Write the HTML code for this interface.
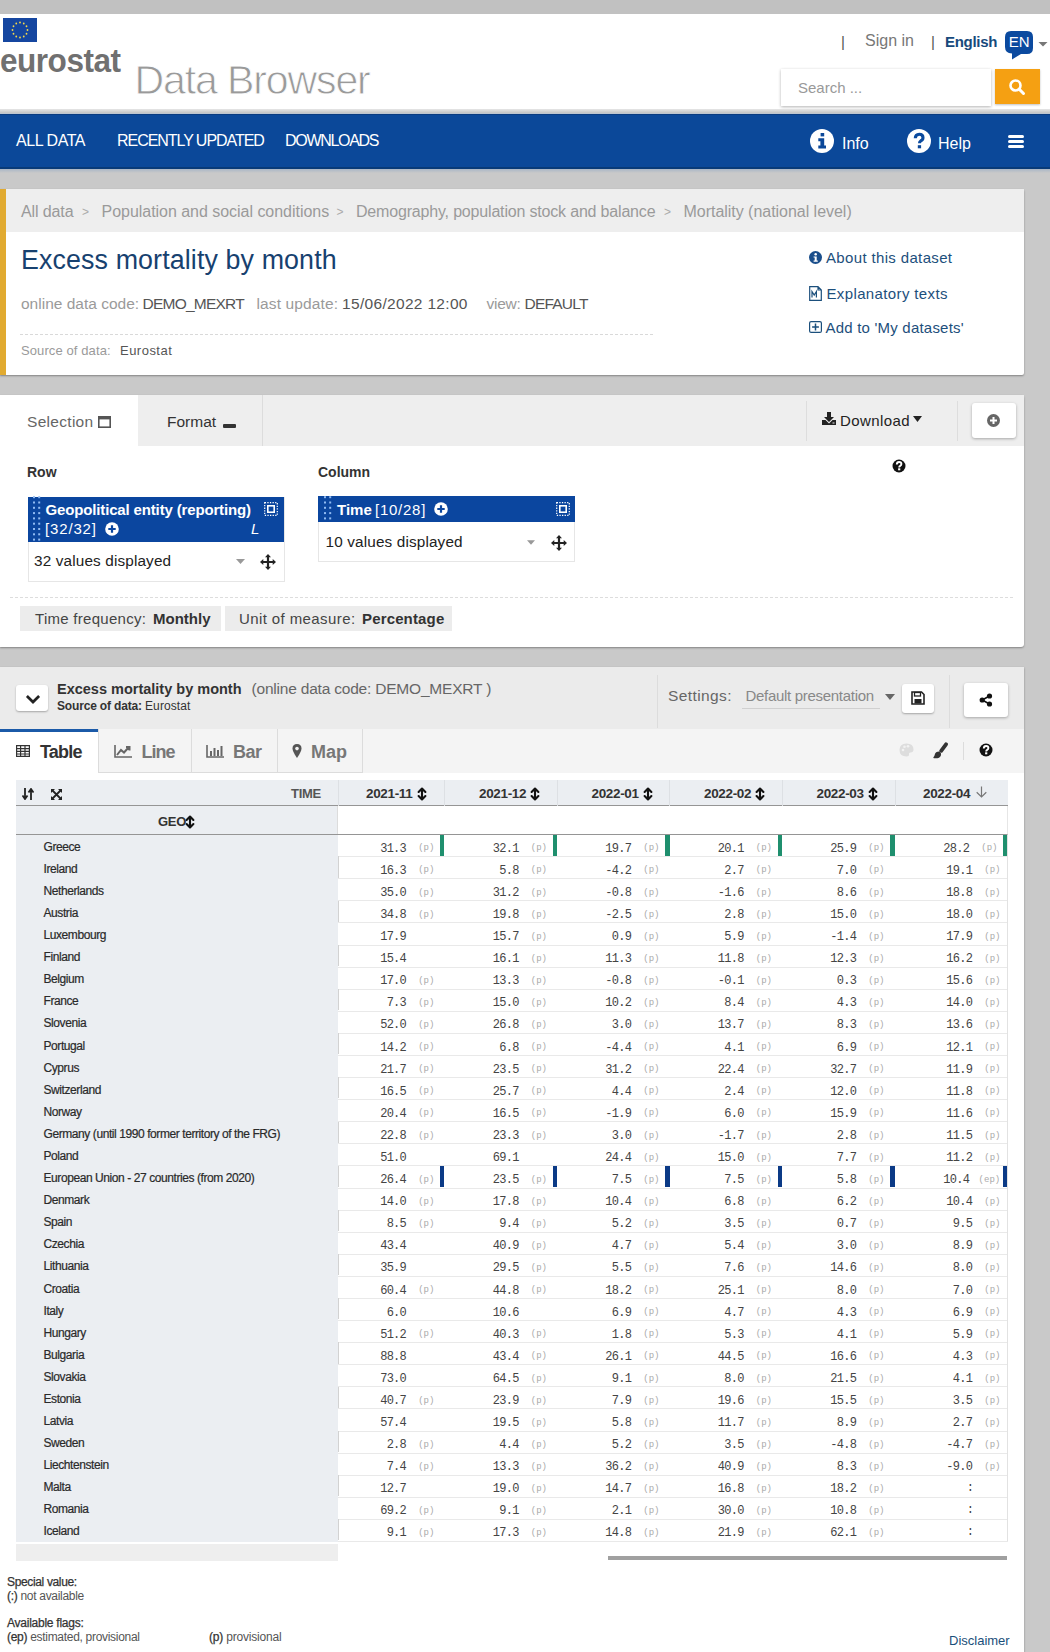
<!DOCTYPE html>
<html><head><meta charset="utf-8">
<style>
*{box-sizing:border-box;margin:0;padding:0}
html,body{width:1050px;height:1652px;overflow:hidden}
body{background:#c9c9c9;font-family:"Liberation Sans",sans-serif;position:relative;color:#333}
.abs{position:absolute}
.t{position:absolute;white-space:nowrap;line-height:1}
#topstrip{left:0;top:0;width:1050px;height:14px;background:#c1c1c1}
#header{left:0;top:14px;width:1050px;height:95px;background:#fff}
#hline{left:0;top:109px;width:1050px;height:5px;background:linear-gradient(#e6e6e6,#c8c8c8 70%,#b8c4d4)}
#nav{left:0;top:114px;width:1050px;height:55px;background:#0b4899;box-shadow:inset 0 1px 0 #0a3c80,inset 0 -2px 0 #083a78}
#navsh{left:0;top:169px;width:1050px;height:4px;background:linear-gradient(#a9b6c6,#c9c9c9)}
.navt{color:#fff;font-size:16px}
.card{position:absolute;background:#fff;box-shadow:0 1px 2px rgba(0,0,0,.35)}
.mono{font-family:"Liberation Mono",monospace}
.rl{left:43.5px;font-size:12px;color:#2a2a2a;letter-spacing:-.42px;-webkit-text-stroke:.2px #2a2a2a}
.mv{font-family:"Liberation Mono",monospace;font-size:12px;color:#444;letter-spacing:-.75px}
.mf{font-family:"Liberation Mono",monospace;font-size:9px;color:#aaa}
.hd{font-size:13.5px;font-weight:bold;color:#333;letter-spacing:-.35px}
.bc{font-size:16px;color:#9a9a9a}
.bcs{font-size:12px;color:#aaa}
.ml{top:296.2px;font-size:15.5px;color:#9a9a9a}
.mvv{top:296.2px;font-size:15.5px;color:#555}
.lk{font-size:15px;color:#1d4f7c}
</style></head><body>
<div id="topstrip" class="abs"></div>
<div id="header" class="abs">
  <!-- EU flag -->
  <svg class="abs" style="left:3px;top:4px" width="34" height="24" viewBox="0 0 34 24">
    <rect width="34" height="24" fill="#1546a0"/>
    <g fill="#f5d94a">
      <circle cx="17" cy="4.5" r="0.9"/><circle cx="20.75" cy="5.5" r="0.9"/><circle cx="23.5" cy="8.25" r="0.9"/><circle cx="24.5" cy="12" r="0.9"/><circle cx="23.5" cy="15.75" r="0.9"/><circle cx="20.75" cy="18.5" r="0.9"/><circle cx="17" cy="19.5" r="0.9"/><circle cx="13.25" cy="18.5" r="0.9"/><circle cx="10.5" cy="15.75" r="0.9"/><circle cx="9.5" cy="12" r="0.9"/><circle cx="10.5" cy="8.25" r="0.9"/><circle cx="13.25" cy="5.5" r="0.9"/>
    </g>
  </svg>
  <div class="t" style="left:0px;top:30px;font-size:33px;font-weight:bold;color:#707070;transform:scaleX(.955);transform-origin:0 0;letter-spacing:-0.5px">eurostat</div>
  <div class="t" style="left:134.5px;top:46px;font-size:41px;color:#9a9a9a;letter-spacing:-1.1px;-webkit-text-stroke:.8px #fff">Data Browser</div>
  <div class="t" style="left:841px;top:20px;font-size:15px;color:#555">|</div>
  <div class="t" style="left:865px;top:19px;font-size:16px;color:#777">Sign in</div>
  <div class="t" style="left:931px;top:20px;font-size:15px;color:#555">|</div>
  <div class="t" style="left:945px;top:20px;font-size:15px;color:#174a7c;font-weight:bold;letter-spacing:-.3px">English</div>
  <svg class="abs" style="left:1005px;top:17px" width="45" height="30" viewBox="0 0 45 30">
    <path d="M6 0 H22 Q28 0 28 6 V17 Q28 23 22 23 H16 L7 28.5 L7 22.5 Q0 22 0 16 V6 Q0 0 6 0Z" fill="#0b4a9f"/>
    <text x="14.2" y="15.8" text-anchor="middle" font-family="Liberation Sans" font-size="15" fill="#fff">EN</text>
    <path d="M33.5 11 H42.5 L38 15.5Z" fill="#777"/>
  </svg>
  <div class="abs" style="left:781px;top:55px;width:210px;height:37px;background:#fff;box-shadow:0 1px 3px rgba(0,0,0,.3)"></div>
  <div class="t" style="left:798px;top:66px;font-size:15px;color:#999">Search ...</div>
  <div class="abs" style="left:995px;top:55px;width:45px;height:35px;background:#f5a012;box-shadow:0 1px 2px rgba(0,0,0,.25)"></div>
  <svg class="abs" style="left:1008px;top:64px" width="18" height="18" viewBox="0 0 18 18">
    <circle cx="7.5" cy="7.5" r="5" fill="none" stroke="#fff" stroke-width="2.6"/>
    <path d="M11 11 L15.5 15.5" stroke="#fff" stroke-width="3" stroke-linecap="round"/>
  </svg>
</div>
<div id="hline" class="abs"></div>
<div id="navsh" class="abs"></div>
<div id="nav" class="abs">
  <div class="t navt" style="left:16px;top:19px;letter-spacing:-.45px">ALL DATA</div>
  <div class="t navt" style="left:117px;top:19px;letter-spacing:-1.05px">RECENTLY UPDATED</div>
  <div class="t navt" style="left:285px;top:19px;letter-spacing:-1.3px">DOWNLOADS</div>
  <svg class="abs" style="left:810px;top:15px" width="24" height="24" viewBox="0 0 24 24">
    <circle cx="12" cy="12" r="12" fill="#fff"/>
    <rect x="10.6" y="4" width="3.6" height="3.4" fill="#0b4899"/>
    <path d="M8.3 9.3 H14.2 V16.6 H16 V19.6 H8.3 V16.6 H10.4 V12.2 H8.3Z" fill="#0b4899"/>
  </svg>
  <div class="t navt" style="left:842px;top:22px;font-size:16px">Info</div>
  <svg class="abs" style="left:907px;top:15px" width="24" height="24" viewBox="0 0 24 24">
    <circle cx="12" cy="12" r="12" fill="#fff"/>
    <path d="M8.3 9.3 Q8.3 5.2 12.2 5.2 Q16 5.2 16 8.7 Q16 10.9 13.6 12 Q12.5 12.6 12.5 14.3" fill="none" stroke="#0a4a9e" stroke-width="3.1"/>
    <rect x="10.8" y="16.2" width="3.3" height="3.1" fill="#0b4899"/>
  </svg>
  <div class="t navt" style="left:938px;top:22px;font-size:16px">Help</div>
  <div class="abs" style="left:1008px;top:20.5px;width:16px;height:3px;background:#fff;border-radius:1.5px"></div>
  <div class="abs" style="left:1008px;top:25.8px;width:16px;height:3px;background:#fff;border-radius:1.5px"></div>
  <div class="abs" style="left:1008px;top:31px;width:16px;height:3px;background:#fff;border-radius:1.5px"></div>
</div>

<!-- CARD 1 -->
<div class="card" style="left:0;top:189px;width:1024px;height:186px;border-radius:0 2px 2px 0"></div>
<div class="abs" style="left:0;top:189px;width:1024px;height:43px;background:#eeeeee"></div>
<div class="abs" style="left:0;top:189px;width:6px;height:186px;background:#e1aa30"></div>
<div class="t bc" style="left:21px;top:203.5px;letter-spacing:-.11px">All data</div>
<div class="t bcs" style="left:82px;top:206px">&gt;</div>
<div class="t bc" style="left:101.5px;top:203.5px;letter-spacing:-.03px">Population and social conditions</div>
<div class="t bcs" style="left:336.5px;top:206px">&gt;</div>
<div class="t bc" style="left:356px;top:203.5px;letter-spacing:-.18px">Demography, population stock and balance</div>
<div class="t bcs" style="left:664px;top:206px">&gt;</div>
<div class="t bc" style="left:683.5px;top:203.5px;letter-spacing:-.03px">Mortality (national level)</div>
<div class="t" style="left:21px;top:246.8px;font-size:26.8px;color:#17416f;letter-spacing:.12px">Excess mortality by month</div>
<div class="t ml" style="left:21px;letter-spacing:0px">online data code:</div>
<div class="t mvv" style="left:142.5px;letter-spacing:-.77px">DEMO_MEXRT</div>
<div class="t ml" style="left:256.5px;letter-spacing:.12px">last update:</div>
<div class="t mvv" style="left:342px;letter-spacing:.32px">15/06/2022 12:00</div>
<div class="t ml" style="left:486.5px;letter-spacing:-.28px">view:</div>
<div class="t mvv" style="left:524.5px;letter-spacing:-.79px">DEFAULT</div>
<div class="abs" style="left:20px;top:334px;width:633px;border-top:1px dashed #d9d9d9"></div>
<div class="t" style="left:21px;top:344px;font-size:13px;color:#9a9a9a;letter-spacing:.1px">Source of data:</div>
<div class="t" style="left:120px;top:344px;font-size:13px;color:#555;letter-spacing:.48px">Eurostat</div>
<svg class="abs" style="left:809px;top:251px" width="13" height="13" viewBox="0 0 13 13"><circle cx="6.5" cy="6.5" r="6.5" fill="#1b4f8c"/><circle cx="6.7" cy="3.3" r="1.25" fill="#fff"/><path d="M4.6 5.4 H7.7 V9.6 H8.8 V10.8 H4.6 V9.6 H5.7 V6.6 H4.6Z" fill="#fff"/></svg>
<div class="t lk" style="left:826px;top:250px;letter-spacing:.35px">About this dataset</div>
<svg class="abs" style="left:809px;top:286px" width="13" height="15" viewBox="0 0 13 15"><path d="M0.7 0.7 H9 L12.3 4 V14.3 H0.7Z M9 0.7 V4 H12.3" fill="none" stroke="#1b4f7c" stroke-width="1.2"/><path d="M3 11.5 V5.5 L5.2 9 L7.4 5.5 V11.5" fill="none" stroke="#1b4f7c" stroke-width="1.2"/></svg>
<div class="t lk" style="left:826.5px;top:285.5px;letter-spacing:.37px">Explanatory texts</div>
<svg class="abs" style="left:809px;top:321px" width="13" height="12" viewBox="0 0 13 12"><rect x="0.6" y="0.6" width="11.8" height="10.8" rx="1.5" fill="none" stroke="#1b4f7c" stroke-width="1.2"/><path d="M6.5 2.6 V9.4 M3.1 6 H9.9" stroke="#1b4f7c" stroke-width="1.5"/></svg>
<div class="t lk" style="left:825.5px;top:320px;letter-spacing:.21px">Add to 'My datasets'</div>

<!-- CARD 2 -->
<div class="card" style="left:0;top:395px;width:1024px;height:252px;border-radius:0 3px 3px 0">
  <div class="abs" style="left:0;top:0;width:1024px;height:51px;background:#eeeeee"></div>
  <div class="abs" style="left:0;top:0;width:138px;height:51px;background:#fff"></div>
  <div class="abs" style="left:262px;top:0;width:1px;height:51px;background:#dcdcdc"></div>
  <div class="t" style="left:27px;top:19px;font-size:15.5px;color:#666;letter-spacing:.3px">Selection</div>
  <svg class="abs" style="left:98px;top:21px" width="13" height="12" viewBox="0 0 13 12"><rect x="0.8" y="0.8" width="11.4" height="10.4" fill="none" stroke="#555" stroke-width="1.6"/><rect x="0.8" y="0.8" width="11.4" height="2.6" fill="#555"/></svg>
  <div class="t" style="left:167px;top:19px;font-size:15.5px;color:#333">Format</div>
  <div class="abs" style="left:223px;top:28.5px;width:13px;height:4px;background:#333;border-radius:1px"></div>
  <div class="abs" style="left:806px;top:6px;width:1px;height:40px;background:#dddddd"></div>
  <div class="abs" style="left:957px;top:6px;width:1px;height:40px;background:#dddddd"></div>
  <svg class="abs" style="left:822px;top:17px" width="14" height="13" viewBox="0 0 14 13"><path d="M5 0 H9 V5 H12 L7 10 L2 5 H5Z" fill="#222"/><path d="M0 8 H3.5 L7 11.5 L10.5 8 H14 V13 H0Z" fill="#222"/><rect x="10.5" y="10.5" width="2" height="1" fill="#ececec"/></svg>
  <div class="t" style="left:840px;top:18px;font-size:15px;color:#222;letter-spacing:.4px">Download</div>
  <svg class="abs" style="left:913px;top:21px" width="9" height="6" viewBox="0 0 9 6"><path d="M0 0 H9 L4.5 6Z" fill="#222"/></svg>
  <div class="abs" style="left:972px;top:8px;width:44px;height:35px;background:#fff;border-radius:3px;box-shadow:0 1px 3px rgba(0,0,0,.3)"></div>
  <svg class="abs" style="left:987px;top:19px" width="13" height="13" viewBox="0 0 13 13"><circle cx="6.5" cy="6.5" r="6.5" fill="#666"/><path d="M6.5 3 V10 M3 6.5 H10" stroke="#fff" stroke-width="2"/></svg>

  <div class="t" style="left:27px;top:70px;font-size:14px;font-weight:bold;color:#333">Row</div>
  <div class="t" style="left:318px;top:70px;font-size:14px;font-weight:bold;color:#333">Column</div>
  <svg class="abs" style="left:892px;top:64px" width="14" height="14" viewBox="0 0 14 14"><circle cx="7" cy="7" r="6.5" fill="#111"/><path d="M4.8 5.5 Q4.8 3 7.1 3 Q9.4 3 9.4 5 Q9.4 6.2 8.2 6.8 Q7.2 7.3 7.2 8.4" fill="none" stroke="#fff" stroke-width="1.9"/><rect x="6.1" y="9.3" width="2.2" height="2" fill="#fff"/></svg>

  <!-- row box -->
  <div class="abs" style="left:27.5px;top:101.5px;width:257px;height:85px;background:#fff;border:1px solid #e6e6e6"></div>
  <div class="abs" style="left:28px;top:101.5px;width:256px;height:45.5px;background:#0b469f"></div>
  <svg class="abs" style="left:31.5px;top:100px" width="9" height="46" viewBox="0 0 9 46"><g fill="#8fbaf2"><rect x="1" y="1.2" width="2" height="2"/><rect x="6.2" y="1.2" width="2" height="2"/><rect x="1" y="6.5" width="2" height="2"/><rect x="6.2" y="6.5" width="2" height="2"/><rect x="1" y="11.8" width="2" height="2"/><rect x="6.2" y="11.8" width="2" height="2"/><rect x="1" y="17.1" width="2" height="2"/><rect x="6.2" y="17.1" width="2" height="2"/><rect x="1" y="22.4" width="2" height="2"/><rect x="6.2" y="22.4" width="2" height="2"/><rect x="1" y="27.7" width="2" height="2"/><rect x="6.2" y="27.7" width="2" height="2"/><rect x="1" y="33.0" width="2" height="2"/><rect x="6.2" y="33.0" width="2" height="2"/><rect x="1" y="38.3" width="2" height="2"/><rect x="6.2" y="38.3" width="2" height="2"/><rect x="1" y="43.6" width="2" height="2"/><rect x="6.2" y="43.6" width="2" height="2"/></g></svg>
  <div class="t" style="left:45.5px;top:107px;font-size:15px;font-weight:bold;color:#fff;letter-spacing:-.15px">Geopolitical entity (reporting)</div>
  <div class="t" style="left:45px;top:126px;font-size:15px;color:#fff;letter-spacing:.85px">[32/32]</div>
  <svg class="abs" style="left:105px;top:127px" width="14" height="14" viewBox="0 0 14 14"><circle cx="7" cy="7" r="6.8" fill="#fff"/><path d="M7 3.3 V10.7 M3.3 7 H10.7" stroke="#0b469f" stroke-width="2.2"/></svg>
  <svg class="abs" style="left:264px;top:107px" width="14" height="14" viewBox="0 0 14 14"><rect x="0.7" y="0.7" width="12.6" height="12.6" fill="none" stroke="#fff" stroke-width="1.2" stroke-dasharray="1.3 1.3"/><rect x="3.8" y="3.8" width="6.4" height="6.4" fill="none" stroke="#fff" stroke-width="1.6"/></svg>
  <div class="t" style="left:251px;top:126px;font-size:15px;font-style:italic;color:#fff">L</div>
  <div class="t" style="left:34px;top:158px;font-size:15.3px;color:#222;letter-spacing:.15px">32 values displayed</div>
  <svg class="abs" style="left:236px;top:164px" width="9" height="5" viewBox="0 0 9 5"><path d="M0 0 H9 L4.5 5Z" fill="#999"/></svg>
  <svg class="abs" style="left:260px;top:159px" width="16" height="16" viewBox="0 0 16 16"><path d="M8 0 L11 3.3 H9.1 V6.9 H12.7 V5 L16 8 L12.7 11 V9.1 H9.1 V12.7 H11 L8 16 L5 12.7 H6.9 V9.1 H3.3 V11 L0 8 L3.3 5 V6.9 H6.9 V3.3 H5Z" fill="#222"/></svg>

  <!-- column box -->
  <div class="abs" style="left:318px;top:101px;width:257px;height:66px;background:#fff;border:1px solid #e6e6e6"></div>
  <div class="abs" style="left:318px;top:101px;width:257px;height:26px;background:#0b469f"></div>
  <svg class="abs" style="left:322.5px;top:100px" width="9" height="26" viewBox="0 0 9 26"><g fill="#8fbaf2"><rect x="1" y="1.2" width="2" height="2"/><rect x="6.2" y="1.2" width="2" height="2"/><rect x="1" y="6.5" width="2" height="2"/><rect x="6.2" y="6.5" width="2" height="2"/><rect x="1" y="11.8" width="2" height="2"/><rect x="6.2" y="11.8" width="2" height="2"/><rect x="1" y="17.1" width="2" height="2"/><rect x="6.2" y="17.1" width="2" height="2"/><rect x="1" y="22.4" width="2" height="2"/><rect x="6.2" y="22.4" width="2" height="2"/></g></svg>
  <div class="t" style="left:337px;top:107px;font-size:15px;color:#fff;font-weight:bold">Time</div><div class="t" style="left:375px;top:107px;font-size:15px;color:#fff;letter-spacing:.75px">[10/28]</div>
  <svg class="abs" style="left:434px;top:107px" width="14" height="14" viewBox="0 0 14 14"><circle cx="7" cy="7" r="6.8" fill="#fff"/><path d="M7 3.3 V10.7 M3.3 7 H10.7" stroke="#0b469f" stroke-width="2.2"/></svg>
  <svg class="abs" style="left:556px;top:107px" width="14" height="14" viewBox="0 0 14 14"><rect x="0.7" y="0.7" width="12.6" height="12.6" fill="none" stroke="#fff" stroke-width="1.2" stroke-dasharray="1.3 1.3"/><rect x="3.8" y="3.8" width="6.4" height="6.4" fill="none" stroke="#fff" stroke-width="1.6"/></svg>
  <div class="t" style="left:325.5px;top:139px;font-size:15.3px;color:#222;letter-spacing:.15px">10 values displayed</div>
  <svg class="abs" style="left:527px;top:145px" width="8" height="5" viewBox="0 0 9 5"><path d="M0 0 H9 L4.5 5Z" fill="#999"/></svg>
  <svg class="abs" style="left:551px;top:140px" width="16" height="16" viewBox="0 0 16 16"><path d="M8 0 L11 3.3 H9.1 V6.9 H12.7 V5 L16 8 L12.7 11 V9.1 H9.1 V12.7 H11 L8 16 L5 12.7 H6.9 V9.1 H3.3 V11 L0 8 L3.3 5 V6.9 H6.9 V3.3 H5Z" fill="#222"/></svg>

  <div class="abs" style="left:10px;top:202px;width:1003px;border-top:1px dashed #dddddd"></div>
  <div class="abs" style="left:20px;top:211px;width:201px;height:25px;background:#ececec"></div>
  <div class="abs" style="left:225px;top:211px;width:227px;height:25px;background:#ececec"></div>
  <div class="t" style="left:35px;top:215.5px;font-size:15px;color:#444;letter-spacing:.28px">Time frequency:</div><div class="t" style="left:153px;top:215.5px;font-size:15px;color:#333;font-weight:bold">Monthly</div>
  <div class="t" style="left:239px;top:215.5px;font-size:15px;color:#444;letter-spacing:.4px">Unit of measure:</div><div class="t" style="left:362px;top:215.5px;font-size:15px;color:#333;font-weight:bold;letter-spacing:.15px">Percentage</div>
</div>

<!-- CARD 3 -->
<div class="card" style="left:0;top:667px;width:1024px;height:1000px"></div>
<div class="abs" style="left:0;top:667px;width:1024px;height:62px;background:#ebebeb"></div>
<div class="abs" style="left:16px;top:685px;width:32px;height:26px;background:#fff;border-radius:3px;box-shadow:0 1px 2px rgba(0,0,0,.3)"></div>
<svg class="abs" style="left:24.5px;top:693.5px" width="16" height="11" viewBox="0 0 16 11"><path d="M1.9 2 L8 8 L14.1 2" fill="none" stroke="#222" stroke-width="2.7"/></svg>
<div class="t" style="left:57px;top:682px;font-size:14.5px;font-weight:bold;color:#333">Excess mortality by month</div>
<div class="t" style="left:251.5px;top:681px;font-size:15.5px;color:#666;letter-spacing:-.2px">(online data code: DEMO_MEXRT )</div>
<div class="t" style="left:57px;top:700px;font-size:12px;color:#333;font-weight:bold;letter-spacing:-.17px">Source of data:</div><div class="t" style="left:145px;top:700px;font-size:12px;color:#333;letter-spacing:.1px">Eurostat</div>
<div class="abs" style="left:657px;top:675px;width:1px;height:53px;background:#dcdcdc"></div>
<div class="t" style="left:668px;top:687.5px;font-size:15.5px;color:#666;letter-spacing:.4px">Settings:</div>
<div class="t" style="left:745.5px;top:687.5px;font-size:15px;color:#888;letter-spacing:-.3px">Default presentation</div>
<div class="abs" style="left:742px;top:708px;width:138px;height:1px;background:#d0d0d0"></div>
<svg class="abs" style="left:885px;top:694px" width="10" height="6" viewBox="0 0 10 6"><path d="M0 0 H10 L5 6Z" fill="#666"/></svg>
<div class="abs" style="left:902px;top:684px;width:32px;height:29px;background:#fff;border-radius:3px;box-shadow:0 1px 2px rgba(0,0,0,.3)"></div>
<svg class="abs" style="left:911px;top:691px" width="14" height="14" viewBox="0 0 14 14"><path d="M1 1 H10.5 L13 3.5 V13 H1Z" fill="none" stroke="#222" stroke-width="1.6"/><rect x="3.5" y="1.5" width="6" height="3.5" fill="none" stroke="#222" stroke-width="1.3"/><rect x="3.5" y="8" width="7" height="4.5" fill="#222"/></svg>
<div class="abs" style="left:949px;top:675px;width:1px;height:53px;background:#dcdcdc"></div>
<div class="abs" style="left:964px;top:683px;width:44px;height:34px;background:#fff;border-radius:3px;box-shadow:0 1px 3px rgba(0,0,0,.3)"></div>
<svg class="abs" style="left:979px;top:693px" width="14" height="14" viewBox="0 0 14 14"><circle cx="10.5" cy="3" r="2.6" fill="#111"/><circle cx="3.2" cy="7" r="2.6" fill="#111"/><circle cx="10.5" cy="11" r="2.6" fill="#111"/><path d="M10.5 3 L3.2 7 L10.5 11" stroke="#111" stroke-width="1.6" fill="none"/></svg>

<!-- tabs row -->
<div class="abs" style="left:0;top:729px;width:1024px;height:44px;background:#f4f4f4"></div>
<div class="abs" style="left:0;top:729px;width:98px;height:44px;background:#fff;border-top:3px solid #1b5aa8"></div>
<div class="abs" style="left:98px;top:729px;width:265px;height:44px;border-left:1px solid #dcdcdc;border-bottom:1px solid #dcdcdc"></div>
<div class="abs" style="left:191px;top:729px;width:1px;height:44px;background:#dcdcdc"></div>
<div class="abs" style="left:277px;top:729px;width:1px;height:44px;background:#dcdcdc"></div>
<div class="abs" style="left:362px;top:729px;width:1px;height:44px;background:#dcdcdc"></div>
<svg class="abs" style="left:16px;top:745px" width="14" height="12" viewBox="0 0 14 12"><path d="M0.6 0.6 H13.4 V11.4 H0.6Z M0.6 3.6 H13.4 M0.6 6.4 H13.4 M0.6 9 H13.4 M4.6 0.6 V11.4 M9 0.6 V11.4" fill="none" stroke="#333" stroke-width="1.2"/></svg>
<div class="t" style="left:40px;top:743px;font-size:18px;font-weight:bold;color:#333;letter-spacing:-.8px">Table</div>
<svg class="abs" style="left:114px;top:745px" width="18" height="13" viewBox="0 0 18 13"><path d="M1 0 V12 H18" fill="none" stroke="#666" stroke-width="1.6"/><path d="M3 10 L7 5 L10 7.5 L14.5 2.5 M12 2 H15.5 V5.5" fill="none" stroke="#666" stroke-width="2"/></svg>
<div class="t" style="left:141.5px;top:743px;font-size:18px;font-weight:bold;color:#777;letter-spacing:-1px">Line</div>
<svg class="abs" style="left:206px;top:745px" width="18" height="13" viewBox="0 0 18 13"><path d="M1 0 V12 H18" fill="none" stroke="#666" stroke-width="1.6"/><rect x="4" y="6" width="2" height="5" fill="#666"/><rect x="7.5" y="3" width="2" height="8" fill="#666"/><rect x="11" y="5" width="2" height="6" fill="#666"/><rect x="14.5" y="1" width="2" height="10" fill="#666"/></svg>
<div class="t" style="left:233px;top:743px;font-size:18px;font-weight:bold;color:#777;letter-spacing:-.5px">Bar</div>
<svg class="abs" style="left:292px;top:744px" width="10" height="14" viewBox="0 0 10 14"><path d="M5 0 Q9.5 0 9.5 4.5 Q9.5 7.5 5 14 Q0.5 7.5 0.5 4.5 Q0.5 0 5 0Z" fill="#555"/><circle cx="5" cy="4.6" r="1.8" fill="#f2f2f2"/></svg>
<div class="t" style="left:311px;top:743px;font-size:18px;font-weight:bold;color:#777">Map</div>
<svg class="abs" style="left:899px;top:743px" width="15" height="14" viewBox="0 0 15 14"><path d="M7.5 0.5 Q14.5 0.5 14.5 6.5 Q14.5 9.5 11.5 9.5 Q9.5 9.5 10 11.3 Q10.3 13.5 7.5 13.5 Q0.5 13.5 0.5 7 Q0.5 0.5 7.5 0.5Z" fill="#dddddd"/><circle cx="4" cy="7" r="1.3" fill="#f2f2f2"/><circle cx="5.5" cy="3.8" r="1.3" fill="#f2f2f2"/><circle cx="9" cy="3.3" r="1.3" fill="#f2f2f2"/></svg>
<svg class="abs" style="left:932px;top:742px" width="16" height="17" viewBox="0 0 16 17"><path d="M14 2.3 L9.2 8.8" stroke="#333" stroke-width="3.8" stroke-linecap="round"/><path d="M7.2 9.6 Q9.6 10.8 8.9 13.4 Q7.8 16.6 2.2 16.2 Q1 16 1.4 15.2 Q2.6 14.3 2.8 12.6 Q3.4 9.6 7.2 9.6Z" fill="#333"/></svg>
<div class="abs" style="left:963px;top:742px;width:1px;height:18px;background:#dcdcdc"></div>
<svg class="abs" style="left:979px;top:743px" width="14" height="14" viewBox="0 0 14 14"><circle cx="7" cy="7" r="6.5" fill="#111"/><path d="M4.8 5.5 Q4.8 3 7.1 3 Q9.4 3 9.4 5 Q9.4 6.2 8.2 6.8 Q7.2 7.3 7.2 8.4" fill="none" stroke="#fff" stroke-width="1.9"/><rect x="6.1" y="9.3" width="2.2" height="2" fill="#fff"/></svg>

<!-- table header -->
<div class="abs" style="left:16px;top:780px;width:992px;height:26px;background:#ebeef2;border-bottom:1.5px solid #959595"></div>
<div class="abs" style="left:16px;top:806px;width:322px;height:28.5px;background:#ebeef2;border-bottom:1.5px solid #959595"></div>
<div class="abs" style="left:338px;top:806px;width:670px;height:28.5px;background:#fff;border-bottom:1.5px solid #959595;border-right:1px solid #e6e6e6"></div>
<div class="abs" style="left:338px;top:780px;width:1px;height:26px;background:#dde0e4"></div>
<div class="abs" style="left:337px;top:806px;width:1px;height:28px;background:#dcdcdc"></div>
<div class="abs" style="left:444px;top:780px;width:1px;height:26px;background:#dde0e4"></div>
<div class="abs" style="left:557px;top:780px;width:1px;height:26px;background:#dde0e4"></div>
<div class="abs" style="left:669px;top:780px;width:1px;height:26px;background:#dde0e4"></div>
<div class="abs" style="left:782px;top:780px;width:1px;height:26px;background:#dde0e4"></div>
<div class="abs" style="left:895px;top:780px;width:1px;height:26px;background:#dde0e4"></div>
<svg class="abs" style="left:22px;top:788px" width="12" height="12" viewBox="0 0 12 12"><path d="M3 0 V10 M0.5 7.5 L3 11 L5.5 7.5" fill="none" stroke="#222" stroke-width="1.8"/><path d="M9 12 V2 M6.5 4.5 L9 1 L11.5 4.5" fill="none" stroke="#222" stroke-width="1.8"/></svg>
<svg class="abs" style="left:51px;top:789px" width="11" height="11" viewBox="0 0 11 11"><path d="M1.5 1.5 L9.5 9.5 M9.5 1.5 L1.5 9.5" stroke="#222" stroke-width="1.8"/><path d="M0 0 H4 L0 4Z M11 0 H7 L11 4Z M0 11 H4 L0 7Z M11 11 H7 L11 7Z" fill="#222"/></svg>
<div class="t" style="left:291px;top:787px;font-size:13px;font-weight:bold;color:#555;letter-spacing:-.3px">TIME</div>
<div class="t hd" style="left:366px;top:786.5px">2021-11</div>
<svg class="abs" style="left:417px;top:786.5px" width="10" height="14" viewBox="0 0 10 14"><path d="M1.6 5 L5 1.6 L8.4 5 M5 2 V12 M1.6 9 L5 12.4 L8.4 9" fill="none" stroke="#111" stroke-width="2.1" stroke-linecap="round" stroke-linejoin="round"/></svg>
<div class="t hd" style="left:479px;top:786.5px">2021-12</div>
<svg class="abs" style="left:530px;top:786.5px" width="10" height="14" viewBox="0 0 10 14"><path d="M1.6 5 L5 1.6 L8.4 5 M5 2 V12 M1.6 9 L5 12.4 L8.4 9" fill="none" stroke="#111" stroke-width="2.1" stroke-linecap="round" stroke-linejoin="round"/></svg>
<div class="t hd" style="left:591.5px;top:786.5px">2022-01</div>
<svg class="abs" style="left:642.5px;top:786.5px" width="10" height="14" viewBox="0 0 10 14"><path d="M1.6 5 L5 1.6 L8.4 5 M5 2 V12 M1.6 9 L5 12.4 L8.4 9" fill="none" stroke="#111" stroke-width="2.1" stroke-linecap="round" stroke-linejoin="round"/></svg>
<div class="t hd" style="left:704px;top:786.5px">2022-02</div>
<svg class="abs" style="left:755px;top:786.5px" width="10" height="14" viewBox="0 0 10 14"><path d="M1.6 5 L5 1.6 L8.4 5 M5 2 V12 M1.6 9 L5 12.4 L8.4 9" fill="none" stroke="#111" stroke-width="2.1" stroke-linecap="round" stroke-linejoin="round"/></svg>
<div class="t hd" style="left:816.5px;top:786.5px">2022-03</div>
<svg class="abs" style="left:867.5px;top:786.5px" width="10" height="14" viewBox="0 0 10 14"><path d="M1.6 5 L5 1.6 L8.4 5 M5 2 V12 M1.6 9 L5 12.4 L8.4 9" fill="none" stroke="#111" stroke-width="2.1" stroke-linecap="round" stroke-linejoin="round"/></svg>
<div class="t hd" style="left:923px;top:786.5px">2022-04</div>
<svg class="abs" style="left:975px;top:786px" width="13" height="12" viewBox="0 0 12 12"><path d="M6 0.5 V11 M1.2 6.3 L6 11 L10.8 6.3" fill="none" stroke="#777" stroke-width="1.2"/></svg>
<div class="t" style="left:158px;top:815px;font-size:13px;font-weight:bold;color:#333;letter-spacing:-.3px">GEO</div>
<svg class="abs" style="left:184.5px;top:815px" width="10" height="14" viewBox="0 0 10 14"><path d="M1.6 5 L5 1.6 L8.4 5 M5 2 V12 M1.6 9 L5 12.4 L8.4 9" fill="none" stroke="#111" stroke-width="2.1" stroke-linecap="round" stroke-linejoin="round"/></svg>
<!-- below table -->
<div class="abs" style="left:16px;top:1544px;width:322px;height:16.5px;background:#eeeeee"></div>
<div class="abs" style="left:608px;top:1555.5px;width:399px;height:4.5px;background:#a0a0a0"></div>
<div class="t" style="left:7px;top:1576px;font-size:12px;color:#333;letter-spacing:-.35px;-webkit-text-stroke:.25px #333">Special value:</div>
<div class="t" style="left:7px;top:1590px;font-size:12px;color:#555;letter-spacing:-.3px"><span style="color:#333;-webkit-text-stroke:.25px #333">(:)</span> not available</div>
<div class="t" style="left:7px;top:1617px;font-size:12px;color:#333;letter-spacing:-.25px;-webkit-text-stroke:.25px #333">Available flags:</div>
<div class="t" style="left:7px;top:1631px;font-size:12px;color:#555;letter-spacing:-.3px"><span style="color:#333;-webkit-text-stroke:.25px #333">(ep)</span> estimated, provisional</div>
<div class="t" style="left:209px;top:1631px;font-size:12px;color:#555;letter-spacing:-.2px"><span style="color:#333;-webkit-text-stroke:.25px #333">(p)</span> provisional</div>
<div class="t" style="left:949px;top:1634px;font-size:13px;color:#1a4f7a">Disclaimer</div>

<!-- TABLE BODY -->
<div class="abs" style="left:16px;top:835px;width:322px;height:706.78px;background:#ebeef2"></div>
<div class="abs" style="left:338px;top:856.19px;width:670px;height:1px;background:#e9e9e9"></div>
<div class="t rl" style="top:840.70px">Greece</div>
<div class="abs" style="left:439.90px;top:834.90px;width:4.5px;height:21.09px;background:#1f8f6e"></div>
<div class="t mv" style="left:326.00px;top:842.70px;width:80px;text-align:right">31.3</div>
<div class="t mf" style="left:411.30px;top:844.40px;width:30px;text-align:center">(p)</div>
<div class="abs" style="left:552.50px;top:834.90px;width:4.5px;height:21.09px;background:#1f8f6e"></div>
<div class="t mv" style="left:438.60px;top:842.70px;width:80px;text-align:right">32.1</div>
<div class="t mf" style="left:523.90px;top:844.40px;width:30px;text-align:center">(p)</div>
<div class="abs" style="left:665.00px;top:834.90px;width:4.5px;height:21.09px;background:#1f8f6e"></div>
<div class="t mv" style="left:551.10px;top:842.70px;width:80px;text-align:right">19.7</div>
<div class="t mf" style="left:636.40px;top:844.40px;width:30px;text-align:center">(p)</div>
<div class="abs" style="left:777.50px;top:834.90px;width:4.5px;height:21.09px;background:#1f8f6e"></div>
<div class="t mv" style="left:663.60px;top:842.70px;width:80px;text-align:right">20.1</div>
<div class="t mf" style="left:748.90px;top:844.40px;width:30px;text-align:center">(p)</div>
<div class="abs" style="left:890.00px;top:834.90px;width:4.5px;height:21.09px;background:#1f8f6e"></div>
<div class="t mv" style="left:776.10px;top:842.70px;width:80px;text-align:right">25.9</div>
<div class="t mf" style="left:861.40px;top:844.40px;width:30px;text-align:center">(p)</div>
<div class="abs" style="left:1003.00px;top:834.90px;width:4.5px;height:21.09px;background:#1f8f6e"></div>
<div class="t mv" style="left:889.10px;top:842.70px;width:80px;text-align:right">28.2</div>
<div class="t mf" style="left:974.40px;top:844.40px;width:30px;text-align:center">(p)</div>
<div class="abs" style="left:338px;top:878.28px;width:670px;height:1px;background:#e9e9e9"></div>
<div class="abs" style="left:337.5px;top:856.49px;width:1px;height:21.09px;background:#d2d2d2"></div>
<div class="t rl" style="top:862.79px">Ireland</div>
<div class="t mv" style="left:326.00px;top:864.79px;width:80px;text-align:right">16.3</div>
<div class="t mf" style="left:411.30px;top:866.49px;width:30px;text-align:center">(p)</div>
<div class="t mv" style="left:438.60px;top:864.79px;width:80px;text-align:right">5.8</div>
<div class="t mf" style="left:523.90px;top:866.49px;width:30px;text-align:center">(p)</div>
<div class="t mv" style="left:551.10px;top:864.79px;width:80px;text-align:right">-4.2</div>
<div class="t mf" style="left:636.40px;top:866.49px;width:30px;text-align:center">(p)</div>
<div class="t mv" style="left:663.60px;top:864.79px;width:80px;text-align:right">2.7</div>
<div class="t mf" style="left:748.90px;top:866.49px;width:30px;text-align:center">(p)</div>
<div class="t mv" style="left:776.10px;top:864.79px;width:80px;text-align:right">7.0</div>
<div class="t mf" style="left:861.40px;top:866.49px;width:30px;text-align:center">(p)</div>
<div class="t mv" style="left:892.10px;top:864.79px;width:80px;text-align:right">19.1</div>
<div class="t mf" style="left:977.40px;top:866.49px;width:30px;text-align:center">(p)</div>
<div class="abs" style="left:338px;top:900.37px;width:670px;height:1px;background:#e9e9e9"></div>
<div class="t rl" style="top:884.88px">Netherlands</div>
<div class="t mv" style="left:326.00px;top:886.88px;width:80px;text-align:right">35.0</div>
<div class="t mf" style="left:411.30px;top:888.58px;width:30px;text-align:center">(p)</div>
<div class="t mv" style="left:438.60px;top:886.88px;width:80px;text-align:right">31.2</div>
<div class="t mf" style="left:523.90px;top:888.58px;width:30px;text-align:center">(p)</div>
<div class="t mv" style="left:551.10px;top:886.88px;width:80px;text-align:right">-0.8</div>
<div class="t mf" style="left:636.40px;top:888.58px;width:30px;text-align:center">(p)</div>
<div class="t mv" style="left:663.60px;top:886.88px;width:80px;text-align:right">-1.6</div>
<div class="t mf" style="left:748.90px;top:888.58px;width:30px;text-align:center">(p)</div>
<div class="t mv" style="left:776.10px;top:886.88px;width:80px;text-align:right">8.6</div>
<div class="t mf" style="left:861.40px;top:888.58px;width:30px;text-align:center">(p)</div>
<div class="t mv" style="left:892.10px;top:886.88px;width:80px;text-align:right">18.8</div>
<div class="t mf" style="left:977.40px;top:888.58px;width:30px;text-align:center">(p)</div>
<div class="abs" style="left:338px;top:922.46px;width:670px;height:1px;background:#e9e9e9"></div>
<div class="abs" style="left:337.5px;top:900.67px;width:1px;height:21.09px;background:#d2d2d2"></div>
<div class="t rl" style="top:906.97px">Austria</div>
<div class="t mv" style="left:326.00px;top:908.97px;width:80px;text-align:right">34.8</div>
<div class="t mf" style="left:411.30px;top:910.67px;width:30px;text-align:center">(p)</div>
<div class="t mv" style="left:438.60px;top:908.97px;width:80px;text-align:right">19.8</div>
<div class="t mf" style="left:523.90px;top:910.67px;width:30px;text-align:center">(p)</div>
<div class="t mv" style="left:551.10px;top:908.97px;width:80px;text-align:right">-2.5</div>
<div class="t mf" style="left:636.40px;top:910.67px;width:30px;text-align:center">(p)</div>
<div class="t mv" style="left:663.60px;top:908.97px;width:80px;text-align:right">2.8</div>
<div class="t mf" style="left:748.90px;top:910.67px;width:30px;text-align:center">(p)</div>
<div class="t mv" style="left:776.10px;top:908.97px;width:80px;text-align:right">15.0</div>
<div class="t mf" style="left:861.40px;top:910.67px;width:30px;text-align:center">(p)</div>
<div class="t mv" style="left:892.10px;top:908.97px;width:80px;text-align:right">18.0</div>
<div class="t mf" style="left:977.40px;top:910.67px;width:30px;text-align:center">(p)</div>
<div class="abs" style="left:338px;top:944.55px;width:670px;height:1px;background:#e9e9e9"></div>
<div class="t rl" style="top:929.06px">Luxembourg</div>
<div class="t mv" style="left:326.00px;top:931.06px;width:80px;text-align:right">17.9</div>
<div class="t mv" style="left:438.60px;top:931.06px;width:80px;text-align:right">15.7</div>
<div class="t mf" style="left:523.90px;top:932.76px;width:30px;text-align:center">(p)</div>
<div class="t mv" style="left:551.10px;top:931.06px;width:80px;text-align:right">0.9</div>
<div class="t mf" style="left:636.40px;top:932.76px;width:30px;text-align:center">(p)</div>
<div class="t mv" style="left:663.60px;top:931.06px;width:80px;text-align:right">5.9</div>
<div class="t mf" style="left:748.90px;top:932.76px;width:30px;text-align:center">(p)</div>
<div class="t mv" style="left:776.10px;top:931.06px;width:80px;text-align:right">-1.4</div>
<div class="t mf" style="left:861.40px;top:932.76px;width:30px;text-align:center">(p)</div>
<div class="t mv" style="left:892.10px;top:931.06px;width:80px;text-align:right">17.9</div>
<div class="t mf" style="left:977.40px;top:932.76px;width:30px;text-align:center">(p)</div>
<div class="abs" style="left:338px;top:966.64px;width:670px;height:1px;background:#e9e9e9"></div>
<div class="abs" style="left:337.5px;top:944.85px;width:1px;height:21.09px;background:#d2d2d2"></div>
<div class="t rl" style="top:951.15px">Finland</div>
<div class="t mv" style="left:326.00px;top:953.15px;width:80px;text-align:right">15.4</div>
<div class="t mv" style="left:438.60px;top:953.15px;width:80px;text-align:right">16.1</div>
<div class="t mf" style="left:523.90px;top:954.85px;width:30px;text-align:center">(p)</div>
<div class="t mv" style="left:551.10px;top:953.15px;width:80px;text-align:right">11.3</div>
<div class="t mf" style="left:636.40px;top:954.85px;width:30px;text-align:center">(p)</div>
<div class="t mv" style="left:663.60px;top:953.15px;width:80px;text-align:right">11.8</div>
<div class="t mf" style="left:748.90px;top:954.85px;width:30px;text-align:center">(p)</div>
<div class="t mv" style="left:776.10px;top:953.15px;width:80px;text-align:right">12.3</div>
<div class="t mf" style="left:861.40px;top:954.85px;width:30px;text-align:center">(p)</div>
<div class="t mv" style="left:892.10px;top:953.15px;width:80px;text-align:right">16.2</div>
<div class="t mf" style="left:977.40px;top:954.85px;width:30px;text-align:center">(p)</div>
<div class="abs" style="left:338px;top:988.73px;width:670px;height:1px;background:#e9e9e9"></div>
<div class="t rl" style="top:973.24px">Belgium</div>
<div class="t mv" style="left:326.00px;top:975.24px;width:80px;text-align:right">17.0</div>
<div class="t mf" style="left:411.30px;top:976.94px;width:30px;text-align:center">(p)</div>
<div class="t mv" style="left:438.60px;top:975.24px;width:80px;text-align:right">13.3</div>
<div class="t mf" style="left:523.90px;top:976.94px;width:30px;text-align:center">(p)</div>
<div class="t mv" style="left:551.10px;top:975.24px;width:80px;text-align:right">-0.8</div>
<div class="t mf" style="left:636.40px;top:976.94px;width:30px;text-align:center">(p)</div>
<div class="t mv" style="left:663.60px;top:975.24px;width:80px;text-align:right">-0.1</div>
<div class="t mf" style="left:748.90px;top:976.94px;width:30px;text-align:center">(p)</div>
<div class="t mv" style="left:776.10px;top:975.24px;width:80px;text-align:right">0.3</div>
<div class="t mf" style="left:861.40px;top:976.94px;width:30px;text-align:center">(p)</div>
<div class="t mv" style="left:892.10px;top:975.24px;width:80px;text-align:right">15.6</div>
<div class="t mf" style="left:977.40px;top:976.94px;width:30px;text-align:center">(p)</div>
<div class="abs" style="left:338px;top:1010.82px;width:670px;height:1px;background:#e9e9e9"></div>
<div class="abs" style="left:337.5px;top:989.03px;width:1px;height:21.09px;background:#d2d2d2"></div>
<div class="t rl" style="top:995.33px">France</div>
<div class="t mv" style="left:326.00px;top:997.33px;width:80px;text-align:right">7.3</div>
<div class="t mf" style="left:411.30px;top:999.03px;width:30px;text-align:center">(p)</div>
<div class="t mv" style="left:438.60px;top:997.33px;width:80px;text-align:right">15.0</div>
<div class="t mf" style="left:523.90px;top:999.03px;width:30px;text-align:center">(p)</div>
<div class="t mv" style="left:551.10px;top:997.33px;width:80px;text-align:right">10.2</div>
<div class="t mf" style="left:636.40px;top:999.03px;width:30px;text-align:center">(p)</div>
<div class="t mv" style="left:663.60px;top:997.33px;width:80px;text-align:right">8.4</div>
<div class="t mf" style="left:748.90px;top:999.03px;width:30px;text-align:center">(p)</div>
<div class="t mv" style="left:776.10px;top:997.33px;width:80px;text-align:right">4.3</div>
<div class="t mf" style="left:861.40px;top:999.03px;width:30px;text-align:center">(p)</div>
<div class="t mv" style="left:892.10px;top:997.33px;width:80px;text-align:right">14.0</div>
<div class="t mf" style="left:977.40px;top:999.03px;width:30px;text-align:center">(p)</div>
<div class="abs" style="left:338px;top:1032.91px;width:670px;height:1px;background:#e9e9e9"></div>
<div class="t rl" style="top:1017.42px">Slovenia</div>
<div class="t mv" style="left:326.00px;top:1019.42px;width:80px;text-align:right">52.0</div>
<div class="t mf" style="left:411.30px;top:1021.12px;width:30px;text-align:center">(p)</div>
<div class="t mv" style="left:438.60px;top:1019.42px;width:80px;text-align:right">26.8</div>
<div class="t mf" style="left:523.90px;top:1021.12px;width:30px;text-align:center">(p)</div>
<div class="t mv" style="left:551.10px;top:1019.42px;width:80px;text-align:right">3.0</div>
<div class="t mf" style="left:636.40px;top:1021.12px;width:30px;text-align:center">(p)</div>
<div class="t mv" style="left:663.60px;top:1019.42px;width:80px;text-align:right">13.7</div>
<div class="t mf" style="left:748.90px;top:1021.12px;width:30px;text-align:center">(p)</div>
<div class="t mv" style="left:776.10px;top:1019.42px;width:80px;text-align:right">8.3</div>
<div class="t mf" style="left:861.40px;top:1021.12px;width:30px;text-align:center">(p)</div>
<div class="t mv" style="left:892.10px;top:1019.42px;width:80px;text-align:right">13.6</div>
<div class="t mf" style="left:977.40px;top:1021.12px;width:30px;text-align:center">(p)</div>
<div class="abs" style="left:338px;top:1055.00px;width:670px;height:1px;background:#e9e9e9"></div>
<div class="abs" style="left:337.5px;top:1033.21px;width:1px;height:21.09px;background:#d2d2d2"></div>
<div class="t rl" style="top:1039.51px">Portugal</div>
<div class="t mv" style="left:326.00px;top:1041.51px;width:80px;text-align:right">14.2</div>
<div class="t mf" style="left:411.30px;top:1043.21px;width:30px;text-align:center">(p)</div>
<div class="t mv" style="left:438.60px;top:1041.51px;width:80px;text-align:right">6.8</div>
<div class="t mf" style="left:523.90px;top:1043.21px;width:30px;text-align:center">(p)</div>
<div class="t mv" style="left:551.10px;top:1041.51px;width:80px;text-align:right">-4.4</div>
<div class="t mf" style="left:636.40px;top:1043.21px;width:30px;text-align:center">(p)</div>
<div class="t mv" style="left:663.60px;top:1041.51px;width:80px;text-align:right">4.1</div>
<div class="t mf" style="left:748.90px;top:1043.21px;width:30px;text-align:center">(p)</div>
<div class="t mv" style="left:776.10px;top:1041.51px;width:80px;text-align:right">6.9</div>
<div class="t mf" style="left:861.40px;top:1043.21px;width:30px;text-align:center">(p)</div>
<div class="t mv" style="left:892.10px;top:1041.51px;width:80px;text-align:right">12.1</div>
<div class="t mf" style="left:977.40px;top:1043.21px;width:30px;text-align:center">(p)</div>
<div class="abs" style="left:338px;top:1077.09px;width:670px;height:1px;background:#e9e9e9"></div>
<div class="t rl" style="top:1061.60px">Cyprus</div>
<div class="t mv" style="left:326.00px;top:1063.60px;width:80px;text-align:right">21.7</div>
<div class="t mf" style="left:411.30px;top:1065.30px;width:30px;text-align:center">(p)</div>
<div class="t mv" style="left:438.60px;top:1063.60px;width:80px;text-align:right">23.5</div>
<div class="t mf" style="left:523.90px;top:1065.30px;width:30px;text-align:center">(p)</div>
<div class="t mv" style="left:551.10px;top:1063.60px;width:80px;text-align:right">31.2</div>
<div class="t mf" style="left:636.40px;top:1065.30px;width:30px;text-align:center">(p)</div>
<div class="t mv" style="left:663.60px;top:1063.60px;width:80px;text-align:right">22.4</div>
<div class="t mf" style="left:748.90px;top:1065.30px;width:30px;text-align:center">(p)</div>
<div class="t mv" style="left:776.10px;top:1063.60px;width:80px;text-align:right">32.7</div>
<div class="t mf" style="left:861.40px;top:1065.30px;width:30px;text-align:center">(p)</div>
<div class="t mv" style="left:892.10px;top:1063.60px;width:80px;text-align:right">11.9</div>
<div class="t mf" style="left:977.40px;top:1065.30px;width:30px;text-align:center">(p)</div>
<div class="abs" style="left:338px;top:1099.18px;width:670px;height:1px;background:#e9e9e9"></div>
<div class="abs" style="left:337.5px;top:1077.39px;width:1px;height:21.09px;background:#d2d2d2"></div>
<div class="t rl" style="top:1083.69px">Switzerland</div>
<div class="t mv" style="left:326.00px;top:1085.69px;width:80px;text-align:right">16.5</div>
<div class="t mf" style="left:411.30px;top:1087.39px;width:30px;text-align:center">(p)</div>
<div class="t mv" style="left:438.60px;top:1085.69px;width:80px;text-align:right">25.7</div>
<div class="t mf" style="left:523.90px;top:1087.39px;width:30px;text-align:center">(p)</div>
<div class="t mv" style="left:551.10px;top:1085.69px;width:80px;text-align:right">4.4</div>
<div class="t mf" style="left:636.40px;top:1087.39px;width:30px;text-align:center">(p)</div>
<div class="t mv" style="left:663.60px;top:1085.69px;width:80px;text-align:right">2.4</div>
<div class="t mf" style="left:748.90px;top:1087.39px;width:30px;text-align:center">(p)</div>
<div class="t mv" style="left:776.10px;top:1085.69px;width:80px;text-align:right">12.0</div>
<div class="t mf" style="left:861.40px;top:1087.39px;width:30px;text-align:center">(p)</div>
<div class="t mv" style="left:892.10px;top:1085.69px;width:80px;text-align:right">11.8</div>
<div class="t mf" style="left:977.40px;top:1087.39px;width:30px;text-align:center">(p)</div>
<div class="abs" style="left:338px;top:1121.27px;width:670px;height:1px;background:#e9e9e9"></div>
<div class="t rl" style="top:1105.78px">Norway</div>
<div class="t mv" style="left:326.00px;top:1107.78px;width:80px;text-align:right">20.4</div>
<div class="t mf" style="left:411.30px;top:1109.48px;width:30px;text-align:center">(p)</div>
<div class="t mv" style="left:438.60px;top:1107.78px;width:80px;text-align:right">16.5</div>
<div class="t mf" style="left:523.90px;top:1109.48px;width:30px;text-align:center">(p)</div>
<div class="t mv" style="left:551.10px;top:1107.78px;width:80px;text-align:right">-1.9</div>
<div class="t mf" style="left:636.40px;top:1109.48px;width:30px;text-align:center">(p)</div>
<div class="t mv" style="left:663.60px;top:1107.78px;width:80px;text-align:right">6.0</div>
<div class="t mf" style="left:748.90px;top:1109.48px;width:30px;text-align:center">(p)</div>
<div class="t mv" style="left:776.10px;top:1107.78px;width:80px;text-align:right">15.9</div>
<div class="t mf" style="left:861.40px;top:1109.48px;width:30px;text-align:center">(p)</div>
<div class="t mv" style="left:892.10px;top:1107.78px;width:80px;text-align:right">11.6</div>
<div class="t mf" style="left:977.40px;top:1109.48px;width:30px;text-align:center">(p)</div>
<div class="abs" style="left:338px;top:1143.36px;width:670px;height:1px;background:#e9e9e9"></div>
<div class="abs" style="left:337.5px;top:1121.57px;width:1px;height:21.09px;background:#d2d2d2"></div>
<div class="t rl" style="top:1127.87px">Germany (until 1990 former territory of the FRG)</div>
<div class="t mv" style="left:326.00px;top:1129.87px;width:80px;text-align:right">22.8</div>
<div class="t mf" style="left:411.30px;top:1131.57px;width:30px;text-align:center">(p)</div>
<div class="t mv" style="left:438.60px;top:1129.87px;width:80px;text-align:right">23.3</div>
<div class="t mf" style="left:523.90px;top:1131.57px;width:30px;text-align:center">(p)</div>
<div class="t mv" style="left:551.10px;top:1129.87px;width:80px;text-align:right">3.0</div>
<div class="t mf" style="left:636.40px;top:1131.57px;width:30px;text-align:center">(p)</div>
<div class="t mv" style="left:663.60px;top:1129.87px;width:80px;text-align:right">-1.7</div>
<div class="t mf" style="left:748.90px;top:1131.57px;width:30px;text-align:center">(p)</div>
<div class="t mv" style="left:776.10px;top:1129.87px;width:80px;text-align:right">2.8</div>
<div class="t mf" style="left:861.40px;top:1131.57px;width:30px;text-align:center">(p)</div>
<div class="t mv" style="left:892.10px;top:1129.87px;width:80px;text-align:right">11.5</div>
<div class="t mf" style="left:977.40px;top:1131.57px;width:30px;text-align:center">(p)</div>
<div class="abs" style="left:338px;top:1165.45px;width:670px;height:1px;background:#e9e9e9"></div>
<div class="t rl" style="top:1149.96px">Poland</div>
<div class="t mv" style="left:326.00px;top:1151.96px;width:80px;text-align:right">51.0</div>
<div class="t mv" style="left:438.60px;top:1151.96px;width:80px;text-align:right">69.1</div>
<div class="t mv" style="left:551.10px;top:1151.96px;width:80px;text-align:right">24.4</div>
<div class="t mf" style="left:636.40px;top:1153.66px;width:30px;text-align:center">(p)</div>
<div class="t mv" style="left:663.60px;top:1151.96px;width:80px;text-align:right">15.0</div>
<div class="t mf" style="left:748.90px;top:1153.66px;width:30px;text-align:center">(p)</div>
<div class="t mv" style="left:776.10px;top:1151.96px;width:80px;text-align:right">7.7</div>
<div class="t mf" style="left:861.40px;top:1153.66px;width:30px;text-align:center">(p)</div>
<div class="t mv" style="left:892.10px;top:1151.96px;width:80px;text-align:right">11.2</div>
<div class="t mf" style="left:977.40px;top:1153.66px;width:30px;text-align:center">(p)</div>
<div class="abs" style="left:338px;top:1187.54px;width:670px;height:1px;background:#e9e9e9"></div>
<div class="abs" style="left:337.5px;top:1165.75px;width:1px;height:21.09px;background:#d2d2d2"></div>
<div class="t rl" style="top:1172.05px">European Union - 27 countries (from 2020)</div>
<div class="abs" style="left:439.90px;top:1166.25px;width:4.5px;height:21.09px;background:#0b3a86"></div>
<div class="t mv" style="left:326.00px;top:1174.05px;width:80px;text-align:right">26.4</div>
<div class="t mf" style="left:411.30px;top:1175.75px;width:30px;text-align:center">(p)</div>
<div class="abs" style="left:552.50px;top:1166.25px;width:4.5px;height:21.09px;background:#0b3a86"></div>
<div class="t mv" style="left:438.60px;top:1174.05px;width:80px;text-align:right">23.5</div>
<div class="t mf" style="left:523.90px;top:1175.75px;width:30px;text-align:center">(p)</div>
<div class="abs" style="left:665.00px;top:1166.25px;width:4.5px;height:21.09px;background:#0b3a86"></div>
<div class="t mv" style="left:551.10px;top:1174.05px;width:80px;text-align:right">7.5</div>
<div class="t mf" style="left:636.40px;top:1175.75px;width:30px;text-align:center">(p)</div>
<div class="abs" style="left:777.50px;top:1166.25px;width:4.5px;height:21.09px;background:#0b3a86"></div>
<div class="t mv" style="left:663.60px;top:1174.05px;width:80px;text-align:right">7.5</div>
<div class="t mf" style="left:748.90px;top:1175.75px;width:30px;text-align:center">(p)</div>
<div class="abs" style="left:890.00px;top:1166.25px;width:4.5px;height:21.09px;background:#0b3a86"></div>
<div class="t mv" style="left:776.10px;top:1174.05px;width:80px;text-align:right">5.8</div>
<div class="t mf" style="left:861.40px;top:1175.75px;width:30px;text-align:center">(p)</div>
<div class="abs" style="left:1003.00px;top:1166.25px;width:4.5px;height:21.09px;background:#0b3a86"></div>
<div class="t mv" style="left:889.10px;top:1174.05px;width:80px;text-align:right">10.4</div>
<div class="t mf" style="left:974.40px;top:1175.75px;width:30px;text-align:center">(ep)</div>
<div class="abs" style="left:338px;top:1209.63px;width:670px;height:1px;background:#e9e9e9"></div>
<div class="t rl" style="top:1194.14px">Denmark</div>
<div class="t mv" style="left:326.00px;top:1196.14px;width:80px;text-align:right">14.0</div>
<div class="t mf" style="left:411.30px;top:1197.84px;width:30px;text-align:center">(p)</div>
<div class="t mv" style="left:438.60px;top:1196.14px;width:80px;text-align:right">17.8</div>
<div class="t mf" style="left:523.90px;top:1197.84px;width:30px;text-align:center">(p)</div>
<div class="t mv" style="left:551.10px;top:1196.14px;width:80px;text-align:right">10.4</div>
<div class="t mf" style="left:636.40px;top:1197.84px;width:30px;text-align:center">(p)</div>
<div class="t mv" style="left:663.60px;top:1196.14px;width:80px;text-align:right">6.8</div>
<div class="t mf" style="left:748.90px;top:1197.84px;width:30px;text-align:center">(p)</div>
<div class="t mv" style="left:776.10px;top:1196.14px;width:80px;text-align:right">6.2</div>
<div class="t mf" style="left:861.40px;top:1197.84px;width:30px;text-align:center">(p)</div>
<div class="t mv" style="left:892.10px;top:1196.14px;width:80px;text-align:right">10.4</div>
<div class="t mf" style="left:977.40px;top:1197.84px;width:30px;text-align:center">(p)</div>
<div class="abs" style="left:338px;top:1231.72px;width:670px;height:1px;background:#e9e9e9"></div>
<div class="abs" style="left:337.5px;top:1209.93px;width:1px;height:21.09px;background:#d2d2d2"></div>
<div class="t rl" style="top:1216.23px">Spain</div>
<div class="t mv" style="left:326.00px;top:1218.23px;width:80px;text-align:right">8.5</div>
<div class="t mf" style="left:411.30px;top:1219.93px;width:30px;text-align:center">(p)</div>
<div class="t mv" style="left:438.60px;top:1218.23px;width:80px;text-align:right">9.4</div>
<div class="t mf" style="left:523.90px;top:1219.93px;width:30px;text-align:center">(p)</div>
<div class="t mv" style="left:551.10px;top:1218.23px;width:80px;text-align:right">5.2</div>
<div class="t mf" style="left:636.40px;top:1219.93px;width:30px;text-align:center">(p)</div>
<div class="t mv" style="left:663.60px;top:1218.23px;width:80px;text-align:right">3.5</div>
<div class="t mf" style="left:748.90px;top:1219.93px;width:30px;text-align:center">(p)</div>
<div class="t mv" style="left:776.10px;top:1218.23px;width:80px;text-align:right">0.7</div>
<div class="t mf" style="left:861.40px;top:1219.93px;width:30px;text-align:center">(p)</div>
<div class="t mv" style="left:892.10px;top:1218.23px;width:80px;text-align:right">9.5</div>
<div class="t mf" style="left:977.40px;top:1219.93px;width:30px;text-align:center">(p)</div>
<div class="abs" style="left:338px;top:1253.81px;width:670px;height:1px;background:#e9e9e9"></div>
<div class="t rl" style="top:1238.32px">Czechia</div>
<div class="t mv" style="left:326.00px;top:1240.32px;width:80px;text-align:right">43.4</div>
<div class="t mv" style="left:438.60px;top:1240.32px;width:80px;text-align:right">40.9</div>
<div class="t mf" style="left:523.90px;top:1242.02px;width:30px;text-align:center">(p)</div>
<div class="t mv" style="left:551.10px;top:1240.32px;width:80px;text-align:right">4.7</div>
<div class="t mf" style="left:636.40px;top:1242.02px;width:30px;text-align:center">(p)</div>
<div class="t mv" style="left:663.60px;top:1240.32px;width:80px;text-align:right">5.4</div>
<div class="t mf" style="left:748.90px;top:1242.02px;width:30px;text-align:center">(p)</div>
<div class="t mv" style="left:776.10px;top:1240.32px;width:80px;text-align:right">3.0</div>
<div class="t mf" style="left:861.40px;top:1242.02px;width:30px;text-align:center">(p)</div>
<div class="t mv" style="left:892.10px;top:1240.32px;width:80px;text-align:right">8.9</div>
<div class="t mf" style="left:977.40px;top:1242.02px;width:30px;text-align:center">(p)</div>
<div class="abs" style="left:338px;top:1275.90px;width:670px;height:1px;background:#e9e9e9"></div>
<div class="abs" style="left:337.5px;top:1254.11px;width:1px;height:21.09px;background:#d2d2d2"></div>
<div class="t rl" style="top:1260.41px">Lithuania</div>
<div class="t mv" style="left:326.00px;top:1262.41px;width:80px;text-align:right">35.9</div>
<div class="t mv" style="left:438.60px;top:1262.41px;width:80px;text-align:right">29.5</div>
<div class="t mf" style="left:523.90px;top:1264.11px;width:30px;text-align:center">(p)</div>
<div class="t mv" style="left:551.10px;top:1262.41px;width:80px;text-align:right">5.5</div>
<div class="t mf" style="left:636.40px;top:1264.11px;width:30px;text-align:center">(p)</div>
<div class="t mv" style="left:663.60px;top:1262.41px;width:80px;text-align:right">7.6</div>
<div class="t mf" style="left:748.90px;top:1264.11px;width:30px;text-align:center">(p)</div>
<div class="t mv" style="left:776.10px;top:1262.41px;width:80px;text-align:right">14.6</div>
<div class="t mf" style="left:861.40px;top:1264.11px;width:30px;text-align:center">(p)</div>
<div class="t mv" style="left:892.10px;top:1262.41px;width:80px;text-align:right">8.0</div>
<div class="t mf" style="left:977.40px;top:1264.11px;width:30px;text-align:center">(p)</div>
<div class="abs" style="left:338px;top:1297.99px;width:670px;height:1px;background:#e9e9e9"></div>
<div class="t rl" style="top:1282.50px">Croatia</div>
<div class="t mv" style="left:326.00px;top:1284.50px;width:80px;text-align:right">60.4</div>
<div class="t mf" style="left:411.30px;top:1286.20px;width:30px;text-align:center">(p)</div>
<div class="t mv" style="left:438.60px;top:1284.50px;width:80px;text-align:right">44.8</div>
<div class="t mf" style="left:523.90px;top:1286.20px;width:30px;text-align:center">(p)</div>
<div class="t mv" style="left:551.10px;top:1284.50px;width:80px;text-align:right">18.2</div>
<div class="t mf" style="left:636.40px;top:1286.20px;width:30px;text-align:center">(p)</div>
<div class="t mv" style="left:663.60px;top:1284.50px;width:80px;text-align:right">25.1</div>
<div class="t mf" style="left:748.90px;top:1286.20px;width:30px;text-align:center">(p)</div>
<div class="t mv" style="left:776.10px;top:1284.50px;width:80px;text-align:right">8.0</div>
<div class="t mf" style="left:861.40px;top:1286.20px;width:30px;text-align:center">(p)</div>
<div class="t mv" style="left:892.10px;top:1284.50px;width:80px;text-align:right">7.0</div>
<div class="t mf" style="left:977.40px;top:1286.20px;width:30px;text-align:center">(p)</div>
<div class="abs" style="left:338px;top:1320.08px;width:670px;height:1px;background:#e9e9e9"></div>
<div class="abs" style="left:337.5px;top:1298.29px;width:1px;height:21.09px;background:#d2d2d2"></div>
<div class="t rl" style="top:1304.59px">Italy</div>
<div class="t mv" style="left:326.00px;top:1306.59px;width:80px;text-align:right">6.0</div>
<div class="t mv" style="left:438.60px;top:1306.59px;width:80px;text-align:right">10.6</div>
<div class="t mv" style="left:551.10px;top:1306.59px;width:80px;text-align:right">6.9</div>
<div class="t mf" style="left:636.40px;top:1308.29px;width:30px;text-align:center">(p)</div>
<div class="t mv" style="left:663.60px;top:1306.59px;width:80px;text-align:right">4.7</div>
<div class="t mf" style="left:748.90px;top:1308.29px;width:30px;text-align:center">(p)</div>
<div class="t mv" style="left:776.10px;top:1306.59px;width:80px;text-align:right">4.3</div>
<div class="t mf" style="left:861.40px;top:1308.29px;width:30px;text-align:center">(p)</div>
<div class="t mv" style="left:892.10px;top:1306.59px;width:80px;text-align:right">6.9</div>
<div class="t mf" style="left:977.40px;top:1308.29px;width:30px;text-align:center">(p)</div>
<div class="abs" style="left:338px;top:1342.17px;width:670px;height:1px;background:#e9e9e9"></div>
<div class="t rl" style="top:1326.68px">Hungary</div>
<div class="t mv" style="left:326.00px;top:1328.68px;width:80px;text-align:right">51.2</div>
<div class="t mf" style="left:411.30px;top:1330.38px;width:30px;text-align:center">(p)</div>
<div class="t mv" style="left:438.60px;top:1328.68px;width:80px;text-align:right">40.3</div>
<div class="t mf" style="left:523.90px;top:1330.38px;width:30px;text-align:center">(p)</div>
<div class="t mv" style="left:551.10px;top:1328.68px;width:80px;text-align:right">1.8</div>
<div class="t mf" style="left:636.40px;top:1330.38px;width:30px;text-align:center">(p)</div>
<div class="t mv" style="left:663.60px;top:1328.68px;width:80px;text-align:right">5.3</div>
<div class="t mf" style="left:748.90px;top:1330.38px;width:30px;text-align:center">(p)</div>
<div class="t mv" style="left:776.10px;top:1328.68px;width:80px;text-align:right">4.1</div>
<div class="t mf" style="left:861.40px;top:1330.38px;width:30px;text-align:center">(p)</div>
<div class="t mv" style="left:892.10px;top:1328.68px;width:80px;text-align:right">5.9</div>
<div class="t mf" style="left:977.40px;top:1330.38px;width:30px;text-align:center">(p)</div>
<div class="abs" style="left:338px;top:1364.26px;width:670px;height:1px;background:#e9e9e9"></div>
<div class="abs" style="left:337.5px;top:1342.47px;width:1px;height:21.09px;background:#d2d2d2"></div>
<div class="t rl" style="top:1348.77px">Bulgaria</div>
<div class="t mv" style="left:326.00px;top:1350.77px;width:80px;text-align:right">88.8</div>
<div class="t mv" style="left:438.60px;top:1350.77px;width:80px;text-align:right">43.4</div>
<div class="t mf" style="left:523.90px;top:1352.47px;width:30px;text-align:center">(p)</div>
<div class="t mv" style="left:551.10px;top:1350.77px;width:80px;text-align:right">26.1</div>
<div class="t mf" style="left:636.40px;top:1352.47px;width:30px;text-align:center">(p)</div>
<div class="t mv" style="left:663.60px;top:1350.77px;width:80px;text-align:right">44.5</div>
<div class="t mf" style="left:748.90px;top:1352.47px;width:30px;text-align:center">(p)</div>
<div class="t mv" style="left:776.10px;top:1350.77px;width:80px;text-align:right">16.6</div>
<div class="t mf" style="left:861.40px;top:1352.47px;width:30px;text-align:center">(p)</div>
<div class="t mv" style="left:892.10px;top:1350.77px;width:80px;text-align:right">4.3</div>
<div class="t mf" style="left:977.40px;top:1352.47px;width:30px;text-align:center">(p)</div>
<div class="abs" style="left:338px;top:1386.35px;width:670px;height:1px;background:#e9e9e9"></div>
<div class="t rl" style="top:1370.86px">Slovakia</div>
<div class="t mv" style="left:326.00px;top:1372.86px;width:80px;text-align:right">73.0</div>
<div class="t mv" style="left:438.60px;top:1372.86px;width:80px;text-align:right">64.5</div>
<div class="t mf" style="left:523.90px;top:1374.56px;width:30px;text-align:center">(p)</div>
<div class="t mv" style="left:551.10px;top:1372.86px;width:80px;text-align:right">9.1</div>
<div class="t mf" style="left:636.40px;top:1374.56px;width:30px;text-align:center">(p)</div>
<div class="t mv" style="left:663.60px;top:1372.86px;width:80px;text-align:right">8.0</div>
<div class="t mf" style="left:748.90px;top:1374.56px;width:30px;text-align:center">(p)</div>
<div class="t mv" style="left:776.10px;top:1372.86px;width:80px;text-align:right">21.5</div>
<div class="t mf" style="left:861.40px;top:1374.56px;width:30px;text-align:center">(p)</div>
<div class="t mv" style="left:892.10px;top:1372.86px;width:80px;text-align:right">4.1</div>
<div class="t mf" style="left:977.40px;top:1374.56px;width:30px;text-align:center">(p)</div>
<div class="abs" style="left:338px;top:1408.44px;width:670px;height:1px;background:#e9e9e9"></div>
<div class="abs" style="left:337.5px;top:1386.65px;width:1px;height:21.09px;background:#d2d2d2"></div>
<div class="t rl" style="top:1392.95px">Estonia</div>
<div class="t mv" style="left:326.00px;top:1394.95px;width:80px;text-align:right">40.7</div>
<div class="t mf" style="left:411.30px;top:1396.65px;width:30px;text-align:center">(p)</div>
<div class="t mv" style="left:438.60px;top:1394.95px;width:80px;text-align:right">23.9</div>
<div class="t mf" style="left:523.90px;top:1396.65px;width:30px;text-align:center">(p)</div>
<div class="t mv" style="left:551.10px;top:1394.95px;width:80px;text-align:right">7.9</div>
<div class="t mf" style="left:636.40px;top:1396.65px;width:30px;text-align:center">(p)</div>
<div class="t mv" style="left:663.60px;top:1394.95px;width:80px;text-align:right">19.6</div>
<div class="t mf" style="left:748.90px;top:1396.65px;width:30px;text-align:center">(p)</div>
<div class="t mv" style="left:776.10px;top:1394.95px;width:80px;text-align:right">15.5</div>
<div class="t mf" style="left:861.40px;top:1396.65px;width:30px;text-align:center">(p)</div>
<div class="t mv" style="left:892.10px;top:1394.95px;width:80px;text-align:right">3.5</div>
<div class="t mf" style="left:977.40px;top:1396.65px;width:30px;text-align:center">(p)</div>
<div class="abs" style="left:338px;top:1430.53px;width:670px;height:1px;background:#e9e9e9"></div>
<div class="t rl" style="top:1415.04px">Latvia</div>
<div class="t mv" style="left:326.00px;top:1417.04px;width:80px;text-align:right">57.4</div>
<div class="t mv" style="left:438.60px;top:1417.04px;width:80px;text-align:right">19.5</div>
<div class="t mf" style="left:523.90px;top:1418.74px;width:30px;text-align:center">(p)</div>
<div class="t mv" style="left:551.10px;top:1417.04px;width:80px;text-align:right">5.8</div>
<div class="t mf" style="left:636.40px;top:1418.74px;width:30px;text-align:center">(p)</div>
<div class="t mv" style="left:663.60px;top:1417.04px;width:80px;text-align:right">11.7</div>
<div class="t mf" style="left:748.90px;top:1418.74px;width:30px;text-align:center">(p)</div>
<div class="t mv" style="left:776.10px;top:1417.04px;width:80px;text-align:right">8.9</div>
<div class="t mf" style="left:861.40px;top:1418.74px;width:30px;text-align:center">(p)</div>
<div class="t mv" style="left:892.10px;top:1417.04px;width:80px;text-align:right">2.7</div>
<div class="t mf" style="left:977.40px;top:1418.74px;width:30px;text-align:center">(p)</div>
<div class="abs" style="left:338px;top:1452.62px;width:670px;height:1px;background:#e9e9e9"></div>
<div class="abs" style="left:337.5px;top:1430.83px;width:1px;height:21.09px;background:#d2d2d2"></div>
<div class="t rl" style="top:1437.13px">Sweden</div>
<div class="t mv" style="left:326.00px;top:1439.13px;width:80px;text-align:right">2.8</div>
<div class="t mf" style="left:411.30px;top:1440.83px;width:30px;text-align:center">(p)</div>
<div class="t mv" style="left:438.60px;top:1439.13px;width:80px;text-align:right">4.4</div>
<div class="t mf" style="left:523.90px;top:1440.83px;width:30px;text-align:center">(p)</div>
<div class="t mv" style="left:551.10px;top:1439.13px;width:80px;text-align:right">5.2</div>
<div class="t mf" style="left:636.40px;top:1440.83px;width:30px;text-align:center">(p)</div>
<div class="t mv" style="left:663.60px;top:1439.13px;width:80px;text-align:right">3.5</div>
<div class="t mf" style="left:748.90px;top:1440.83px;width:30px;text-align:center">(p)</div>
<div class="t mv" style="left:776.10px;top:1439.13px;width:80px;text-align:right">-4.8</div>
<div class="t mf" style="left:861.40px;top:1440.83px;width:30px;text-align:center">(p)</div>
<div class="t mv" style="left:892.10px;top:1439.13px;width:80px;text-align:right">-4.7</div>
<div class="t mf" style="left:977.40px;top:1440.83px;width:30px;text-align:center">(p)</div>
<div class="abs" style="left:338px;top:1474.71px;width:670px;height:1px;background:#e9e9e9"></div>
<div class="t rl" style="top:1459.22px">Liechtenstein</div>
<div class="t mv" style="left:326.00px;top:1461.22px;width:80px;text-align:right">7.4</div>
<div class="t mf" style="left:411.30px;top:1462.92px;width:30px;text-align:center">(p)</div>
<div class="t mv" style="left:438.60px;top:1461.22px;width:80px;text-align:right">13.3</div>
<div class="t mf" style="left:523.90px;top:1462.92px;width:30px;text-align:center">(p)</div>
<div class="t mv" style="left:551.10px;top:1461.22px;width:80px;text-align:right">36.2</div>
<div class="t mf" style="left:636.40px;top:1462.92px;width:30px;text-align:center">(p)</div>
<div class="t mv" style="left:663.60px;top:1461.22px;width:80px;text-align:right">40.9</div>
<div class="t mf" style="left:748.90px;top:1462.92px;width:30px;text-align:center">(p)</div>
<div class="t mv" style="left:776.10px;top:1461.22px;width:80px;text-align:right">8.3</div>
<div class="t mf" style="left:861.40px;top:1462.92px;width:30px;text-align:center">(p)</div>
<div class="t mv" style="left:892.10px;top:1461.22px;width:80px;text-align:right">-9.0</div>
<div class="t mf" style="left:977.40px;top:1462.92px;width:30px;text-align:center">(p)</div>
<div class="abs" style="left:338px;top:1496.80px;width:670px;height:1px;background:#e9e9e9"></div>
<div class="abs" style="left:337.5px;top:1475.01px;width:1px;height:21.09px;background:#d2d2d2"></div>
<div class="t rl" style="top:1481.31px">Malta</div>
<div class="t mv" style="left:326.00px;top:1483.31px;width:80px;text-align:right">12.7</div>
<div class="t mv" style="left:438.60px;top:1483.31px;width:80px;text-align:right">19.0</div>
<div class="t mf" style="left:523.90px;top:1485.01px;width:30px;text-align:center">(p)</div>
<div class="t mv" style="left:551.10px;top:1483.31px;width:80px;text-align:right">14.7</div>
<div class="t mf" style="left:636.40px;top:1485.01px;width:30px;text-align:center">(p)</div>
<div class="t mv" style="left:663.60px;top:1483.31px;width:80px;text-align:right">16.8</div>
<div class="t mf" style="left:748.90px;top:1485.01px;width:30px;text-align:center">(p)</div>
<div class="t mv" style="left:776.10px;top:1483.31px;width:80px;text-align:right">18.2</div>
<div class="t mf" style="left:861.40px;top:1485.01px;width:30px;text-align:center">(p)</div>
<div class="t mv" style="left:966.00px;top:1482.01px;width:8px;text-align:center">:</div>
<div class="abs" style="left:338px;top:1518.89px;width:670px;height:1px;background:#e9e9e9"></div>
<div class="t rl" style="top:1503.40px">Romania</div>
<div class="t mv" style="left:326.00px;top:1505.40px;width:80px;text-align:right">69.2</div>
<div class="t mf" style="left:411.30px;top:1507.10px;width:30px;text-align:center">(p)</div>
<div class="t mv" style="left:438.60px;top:1505.40px;width:80px;text-align:right">9.1</div>
<div class="t mf" style="left:523.90px;top:1507.10px;width:30px;text-align:center">(p)</div>
<div class="t mv" style="left:551.10px;top:1505.40px;width:80px;text-align:right">2.1</div>
<div class="t mf" style="left:636.40px;top:1507.10px;width:30px;text-align:center">(p)</div>
<div class="t mv" style="left:663.60px;top:1505.40px;width:80px;text-align:right">30.0</div>
<div class="t mf" style="left:748.90px;top:1507.10px;width:30px;text-align:center">(p)</div>
<div class="t mv" style="left:776.10px;top:1505.40px;width:80px;text-align:right">10.8</div>
<div class="t mf" style="left:861.40px;top:1507.10px;width:30px;text-align:center">(p)</div>
<div class="t mv" style="left:966.00px;top:1504.10px;width:8px;text-align:center">:</div>
<div class="abs" style="left:338px;top:1540.98px;width:670px;height:1px;background:#e9e9e9"></div>
<div class="abs" style="left:337.5px;top:1519.19px;width:1px;height:21.09px;background:#d2d2d2"></div>
<div class="t rl" style="top:1525.49px">Iceland</div>
<div class="t mv" style="left:326.00px;top:1527.49px;width:80px;text-align:right">9.1</div>
<div class="t mf" style="left:411.30px;top:1529.19px;width:30px;text-align:center">(p)</div>
<div class="t mv" style="left:438.60px;top:1527.49px;width:80px;text-align:right">17.3</div>
<div class="t mf" style="left:523.90px;top:1529.19px;width:30px;text-align:center">(p)</div>
<div class="t mv" style="left:551.10px;top:1527.49px;width:80px;text-align:right">14.8</div>
<div class="t mf" style="left:636.40px;top:1529.19px;width:30px;text-align:center">(p)</div>
<div class="t mv" style="left:663.60px;top:1527.49px;width:80px;text-align:right">21.9</div>
<div class="t mf" style="left:748.90px;top:1529.19px;width:30px;text-align:center">(p)</div>
<div class="t mv" style="left:776.10px;top:1527.49px;width:80px;text-align:right">62.1</div>
<div class="t mf" style="left:861.40px;top:1529.19px;width:30px;text-align:center">(p)</div>
<div class="t mv" style="left:966.00px;top:1526.19px;width:8px;text-align:center">:</div>
<div class="abs" style="left:1007px;top:835px;width:1px;height:706.28px;background:#e2e2e2"></div>
</body></html>
